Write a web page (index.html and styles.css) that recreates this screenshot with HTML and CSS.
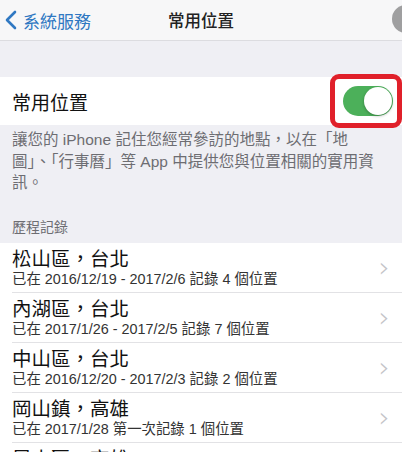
FILE: index.html
```html
<!DOCTYPE html>
<html lang="zh-Hant">
<head>
  <meta charset="UTF-8">
  <title>常用位置</title>
  <link rel="stylesheet" href="styles.css">
</head>
<body>
  <div class="nav">
    <div class="back">
      <svg width="12" height="20" viewBox="0 0 12 20"><path d="M10 2 L2 10 L10 18" fill="none" stroke="#2f78c2" stroke-width="2.6" stroke-linecap="round" stroke-linejoin="round"/></svg>
      <span>系統服務</span>
    </div>
    <div class="title">常用位置</div>
    <div class="touch-dot"></div>
  </div>

  <div class="spacer"></div>

  <div class="switch-row">
    <span>常用位置</span>
    <div class="highlight">
      <div class="toggle"><div class="knob"></div></div>
    </div>
  </div>

  <p class="note">讓您的 iPhone 記住您經常參訪的地點，以在「地<br>圖」、「行事曆」等 App 中提供您與位置相關的實用資<br>訊。</p>

  <div class="section-head">歷程記錄</div>

  <div class="list">
    <div class="item">
      <div class="text"><div class="name">松山區，台北</div><div class="sub">已在 2016/12/19 - 2017/2/6 記錄 4 個位置</div></div>
      <span class="chev">›</span>
    </div>
    <div class="item">
      <div class="text"><div class="name">內湖區，台北</div><div class="sub">已在 2017/1/26 - 2017/2/5 記錄 7 個位置</div></div>
      <span class="chev">›</span>
    </div>
    <div class="item">
      <div class="text"><div class="name">中山區，台北</div><div class="sub">已在 2016/12/20 - 2017/2/3 記錄 2 個位置</div></div>
      <span class="chev">›</span>
    </div>
    <div class="item">
      <div class="text"><div class="name">岡山鎮，高雄</div><div class="sub">已在 2017/1/28 第一次記錄 1 個位置</div></div>
      <span class="chev">›</span>
    </div>
    <div class="item">
      <div class="text"><div class="name">鳳山區，高雄</div><div class="sub">已在 2017/1/28 第一次記錄 1 個位置</div></div>
      <span class="chev">›</span>
    </div>
  </div>
</body>
</html>
```

FILE: styles.css
```css
html, body {
  margin: 0;
  padding: 0;
  background: #efeff4;
  font-family: "Liberation Sans", "Noto Sans CJK TC", sans-serif;
  color: #111;
  overflow: hidden;
}
.nav {
  position: relative;
  height: 40px;
  background: #f7f7f8;
  border-bottom: 1px solid #dcdce0;
  display: flex;
  align-items: center;
  justify-content: center;
}
.back {
  position: absolute;
  left: 5px;
  top: 0;
  height: 40px;
  display: flex;
  align-items: center;
  gap: 6px;
  color: #2f78c2;
  font-size: 17px;
}
.title {
  font-size: 16.5px;
  font-weight: 500;
  color: #222;
}
.touch-dot {
  position: absolute;
  right: -18px;
  top: 5px;
  width: 28px;
  height: 28px;
  border-radius: 50%;
  background: #8f8f91;
  opacity: 0.85;
}
.spacer {
  height: 36px;
}
.switch-row {
  height: 48px;
  background: #fff;
  display: flex;
  align-items: center;
  justify-content: space-between;
  padding-left: 12px;
  font-size: 19px;
}
.highlight {
  border: 5px solid #e0202a;
  border-radius: 9px;
  padding: 7px 4px 7px 8px;
  display: flex;
}
.toggle {
  width: 50px;
  height: 30px;
  border-radius: 15px;
  background: #4cb05a;
  position: relative;
}
.knob {
  position: absolute;
  right: 1px;
  top: 1px;
  width: 28px;
  height: 28px;
  border-radius: 50%;
  background: #fff;
  box-shadow: 0 1px 3px rgba(0,0,0,0.3);
}
.note {
  margin: 0;
  padding: 4px 10px 0 12px;
  font-size: 15.5px;
  line-height: 21.5px;
  color: #6d6d72;
  white-space: nowrap;
}
.section-head {
  padding: 22px 12px 7px;
  font-size: 14px;
  color: #6d6d72;
}
.list {
  background: #fff;
}
.item {
  height: 49px;
  margin-left: 12px;
  padding-right: 12px;
  display: flex;
  align-items: center;
  justify-content: space-between;
  border-bottom: 1px solid #e2e2e5;
}
.name {
  font-size: 19.5px;
  line-height: 24px;
}
.sub {
  font-size: 14.4px;
  line-height: 17px;
  color: #333;
}
.chev {
  font-size: 28px;
  color: #c4c4c8;
  font-family: "DejaVu Sans", sans-serif;
  font-weight: 300;
}
```
